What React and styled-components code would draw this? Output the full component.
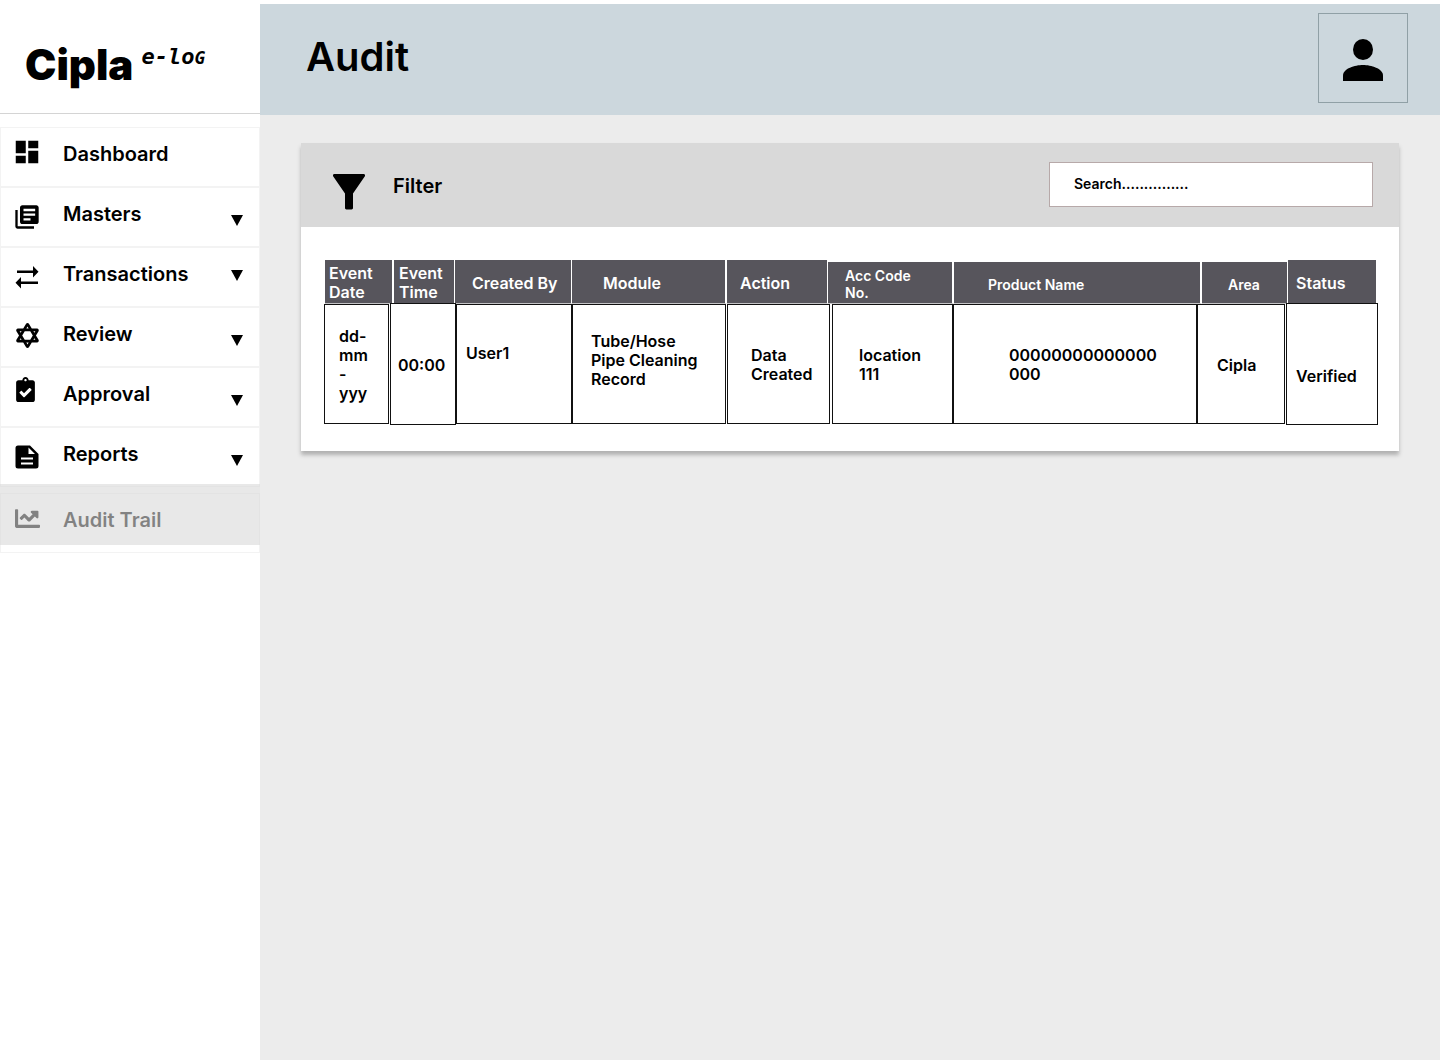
import React from "react";
import styled, { createGlobalStyle, css } from "styled-components";
import { MdDashboard, MdLibraryBooks } from "react-icons/md";
import { FaStarOfDavid, FaClipboardCheck, FaChartLine } from "react-icons/fa";

const GlobalStyle = createGlobalStyle`
  *, *::before, *::after { box-sizing: border-box; }
  body {
    margin: 0;
    background: #ffffff;
    color: #000000;
    font-family: Inter, "Liberation Sans", sans-serif;
    font-weight: 600;
  }
  button, input { font: inherit; color: inherit; }
`;

const Page = styled.div`
  display: grid;
  grid-template-columns: 260px minmax(0, 1fr);
  min-height: 100vh;
`;

const Sidebar = styled.aside`
  background: #ffffff;
`;

const Brand = styled.div`
  display: flex;
  align-items: flex-start;
  gap: 8px;
  height: 114px;
  padding: 40px 0 0 25px;
  border-bottom: 1px solid #d4d4d4;
`;

const BrandName = styled.span`
  font-size: 42px;
  line-height: 50px;
  font-weight: 900;
`;

const BrandProduct = styled.span`
  font-family: "DejaVu Sans Mono", monospace;
  font-size: 22px;
  line-height: 34px;
  font-style: italic;
  font-weight: 700;
`;

const BrandSmall = styled.span`
  font-size: 18px;
`;

const NavList = styled.ul`
  list-style: none;
  margin: 13px 0 0;
  padding: 0;
`;

const NavItem = styled.li`
  position: relative;
  height: 60px;
  border: 1px solid #f3f3f3;
  ${({ $active }) =>
    $active &&
    css`
      margin-top: 6px;
      &::after {
        content: "";
        position: absolute;
        inset: -10px -1px 7px;
        background: rgba(217, 217, 217, 0.6);
        pointer-events: none;
      }
    `}
`;

const navRow = css`
  display: grid;
  grid-template-columns: 28px 1fr 12px;
  column-gap: 22px;
  align-items: center;
  width: 100%;
  height: 100%;
  padding: 0 16px 0 12px;
  border: 0;
  background: none;
  color: inherit;
  text-align: left;
  text-decoration: none;
  cursor: pointer;
`;

const NavLink = styled.a`
  ${navRow}
`;

const NavButton = styled.button`
  ${navRow}
`;

const NavIcon = styled.span`
  display: flex;
  justify-content: ${({ $side }) => $side || "center"};
  padding-bottom: ${({ $lift }) => $lift || 0}px;
  svg {
    flex: none;
  }
`;

const NavLabel = styled.span`
  font-size: 20px;
  line-height: 24px;
  padding-bottom: 6px;
`;

const Caret = styled.svg`
  display: block;
  width: 12px;
  height: 11px;
  margin-top: ${({ $high }) => ($high ? -4 : 6)}px;
`;

const Main = styled.main`
  background: #ececec;
`;

const TopBar = styled.header`
  display: flex;
  align-items: flex-start;
  justify-content: space-between;
  height: 115px;
  padding: 9px 32px 0 46px;
  border-top: 4px solid #ffffff;
  background: #ccd7dd;
`;

const Title = styled.h1`
  margin: 20px 0 0;
  font-size: 40px;
  line-height: 48px;
  font-weight: 600;
`;

const ProfileButton = styled.button`
  display: flex;
  align-items: center;
  justify-content: center;
  width: 90px;
  height: 90px;
  padding: 4px 0 0;
  border: 1px solid #90a0a6;
  background: none;
  cursor: pointer;
`;

const Card = styled.section`
  margin: 28px 41px 0;
  background: #ffffff;
  box-shadow: 0 4px 4px rgba(0, 0, 0, 0.25);
`;

const FilterBar = styled.div`
  display: flex;
  align-items: flex-start;
  justify-content: space-between;
  height: 84px;
  padding: 19px 26px 0 32px;
  background: #d9d9d9;
`;

const FilterButton = styled.button`
  display: flex;
  align-items: flex-end;
  gap: 28px;
  padding: 12px 0 0;
  border: 0;
  background: none;
  font-size: 20px;
  line-height: 24px;
  cursor: pointer;
`;

const FilterText = styled.span`
  padding-bottom: 12px;
`;

const SearchInput = styled.input`
  width: 324px;
  height: 45px;
  padding: 0 24px 2px;
  border: 1px solid #b7a9a9;
  border-radius: 0;
  background: #ffffff;
  font-size: 14px;
  line-height: 17px;
  &::placeholder {
    color: #000000;
    opacity: 1;
  }
`;

const TableArea = styled.div`
  padding: 33px 21px 27px 23px;
`;

const Table = styled.table`
  display: block;
  width: 100%;
  font-size: 16px;
  line-height: 19px;
`;

const TableHead = styled.thead`
  display: block;
`;

const TableBody = styled.tbody`
  display: block;
`;

const HeadRow = styled.tr`
  display: grid;
  grid-template-columns: 69fr 61fr 117fr 155fr 101fr 126fr 248fr 86fr 88fr;
  height: 44px;
  padding: 0 2px 0 1px;
`;

const HeadCell = styled.th`
  display: flex;
  align-items: center;
  padding: 3px 0 0 ${({ $indent }) => $indent}px;
  border: 0 solid #ffffff;
  border-right-width: ${({ $rule }) => $rule}px;
  border-bottom: 1px solid #c4c4c6;
  background: #57555c;
  color: #ffffff;
  font-weight: 600;
  text-align: left;
  white-space: pre-line;
  ${({ $compact }) =>
    $compact &&
    css`
      margin-top: 2px;
      font-size: 14px;
      line-height: 17px;
    `}
`;

const BodyRow = styled.tr`
  display: grid;
  grid-template-columns: 66fr 66fr 116fr 155fr 105fr 121fr 244fr 89fr 92fr;
  height: 120px;
`;

const BodyCell = styled.td`
  display: flex;
  align-items: center;
  margin-right: ${({ $gap }) => $gap || 0}px;
  padding: ${({ $down }) => $down || 2}px 0 ${({ $up }) => $up || 0}px ${({ $indent }) => $indent}px;
  border: 1px solid #111111;
  white-space: pre-line;
  ${({ $tall }) =>
    $tall &&
    css`
      margin-top: -1px;
      margin-bottom: -1px;
    `}
`;

const SwapIcon = () => (
  <svg width="24" height="24" viewBox="0 0 24 24" aria-hidden="true">
    <path d="M2 5.500h16V1l5.500 5.700-5.500 5.700V8H2zM23 16.500H6V12L.5 17.700 6 23.400V19h17z" />
  </svg>
);

const ReportIcon = () => (
  <svg width="24" height="24" viewBox="0 0 24 24" aria-hidden="true">
    <path
      fillRule="evenodd"
      d="M3 .5h12L23.500 9v12a2.500 2.500 0 0 1-2.500 2.500H3A2.500 2.500 0 0 1 .5 21V3A2.500 2.500 0 0 1 3 .5zM13.500 2.500V9H20zM6 12.500v2h12v-2zM6 17.500v2h12v-2z"
    />
  </svg>
);

const FunnelIcon = () => (
  <svg width="32" height="36" viewBox="0 0 32 36" aria-hidden="true">
    <path d="M1.500 0h29c1.400 0 2 1.500 1.200 2.600L20 19.500V34c0 .8-.6 1.400-1.400 1.400h-5.200c-.8 0-1.400-.6-1.400-1.400V19.500L.3 2.600C-.5 1.500.1 0 1.500 0z" />
  </svg>
);

const PersonIcon = () => (
  <svg width="40" height="42" viewBox="0 0 40 42" aria-hidden="true">
    <ellipse cx="20" cy="10.500" rx="10" ry="10.500" />
    <path d="M0 42v-5.500C0 29.500 12 26 20 26s20 3.500 20 10.500V42z" />
  </svg>
);

const navItems = [
  { label: "Dashboard", icon: <MdDashboard size={30} />, lift: 10 },
  { label: "Masters", icon: <MdLibraryBooks size={28} />, menu: true },
  { label: "Transactions", icon: <SwapIcon />, menu: true, highCaret: true },
  { label: "Review", icon: <FaStarOfDavid size={25} />, lift: 4, menu: true },
  { label: "Approval", icon: <FaClipboardCheck size={25} />, lift: 16, side: "flex-start", menu: true },
  { label: "Reports", icon: <ReportIcon />, menu: true },
  { label: "Audit Trail", icon: <FaChartLine size={25} />, lift: 10, active: true },
];

const columns = [
  { title: "Event\nDate", indent: 4, rule: 2 },
  { title: "Event\nTime", indent: 5, rule: 1 },
  { title: "Created By", indent: 17, rule: 1 },
  { title: "Module", indent: 31, rule: 2 },
  { title: "Action", indent: 13, rule: 1 },
  { title: "Acc Code\nNo.", indent: 17, rule: 2, compact: true },
  { title: "Product Name", indent: 34, rule: 2, compact: true },
  { title: "Area", indent: 26, rule: 1, compact: true },
  { title: "Status", indent: 8, rule: 0 },
];

const cells = [
  { text: "dd-\nmm\n-\nyyy", indent: 14, gap: 1 },
  { text: "00:00", indent: 7, tall: true },
  { text: "User1", indent: 9, up: 24 },
  { text: "Tube/Hose\nPipe Cleaning\nRecord", indent: 18, up: 9, gap: 1 },
  { text: "Data\nCreated", indent: 23, gap: 2 },
  { text: "location\n111", indent: 26 },
  { text: "00000000000000\n000", indent: 55 },
  { text: "Cipla", indent: 19, gap: 1 },
  { text: "Verified", indent: 9, down: 24, tall: true },
];

function NavEntry({ item }) {
  const Row = item.menu ? NavButton : NavLink;
  const rowProps = item.menu ? { type: "button", "aria-expanded": false } : { href: "#" };
  return (
    <NavItem $active={item.active}>
      <Row {...rowProps} aria-current={item.active ? "page" : undefined}>
        <NavIcon $lift={item.lift} $side={item.side}>{item.icon}</NavIcon>
        <NavLabel>{item.label}</NavLabel>
        {item.menu && (
          <Caret viewBox="0 0 12 11" $high={item.highCaret} aria-hidden="true">
            <path d="M0 0h12L6 11z" />
          </Caret>
        )}
      </Row>
    </NavItem>
  );
}

export default function App() {
  return (
    <>
      <GlobalStyle />
      <Page>
        <Sidebar>
          <Brand>
            <BrandName>Cipla</BrandName>
            <BrandProduct>
              e-lo<BrandSmall>G</BrandSmall>
            </BrandProduct>
          </Brand>
          <nav>
            <NavList>
              {navItems.map((item) => (
                <NavEntry key={item.label} item={item} />
              ))}
            </NavList>
          </nav>
        </Sidebar>
        <Main>
          <TopBar>
            <Title>Audit</Title>
            <ProfileButton type="button" aria-label="Profile">
              <PersonIcon />
            </ProfileButton>
          </TopBar>
          <Card>
            <FilterBar>
              <FilterButton type="button">
                <FunnelIcon />
                <FilterText>Filter</FilterText>
              </FilterButton>
              <SearchInput type="search" aria-label="Search" placeholder="Search..............." />
            </FilterBar>
            <TableArea>
              <Table>
                <TableHead>
                  <HeadRow>
                    {columns.map((c) => (
                      <HeadCell key={c.title} scope="col" $indent={c.indent} $rule={c.rule} $compact={c.compact}>
                        {c.title}
                      </HeadCell>
                    ))}
                  </HeadRow>
                </TableHead>
                <TableBody>
                  <BodyRow>
                    {cells.map((c) => (
                      <BodyCell
                        key={c.text}
                        $indent={c.indent}
                        $gap={c.gap}
                        $up={c.up}
                        $down={c.down}
                        $tall={c.tall}
                      >
                        {c.text}
                      </BodyCell>
                    ))}
                  </BodyRow>
                </TableBody>
              </Table>
            </TableArea>
          </Card>
        </Main>
      </Page>
    </>
  );
}
